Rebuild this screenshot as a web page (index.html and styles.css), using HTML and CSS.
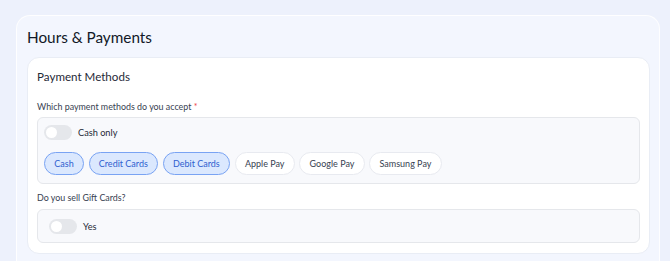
FILE: index.html
```html
<!DOCTYPE html>
<html>
<head>
<meta charset="utf-8">
<link rel="stylesheet" href="styles.css">
</head>
<body>
<div class="page">
  <section class="outer">
    <h1 class="title">Hours &amp; Payments</h1>
    <div class="card">
      <h2 class="card-title">Payment Methods</h2>
      <div class="label">Which payment methods do you accept <span class="req">*</span></div>
      <div class="box box-methods">
        <div class="toggle-row">
          <span class="toggle"><span class="knob"></span></span>
          <span class="toggle-label">Cash only</span>
        </div>
        <div class="chips">
          <span class="chip on">Cash</span>
          <span class="chip on">Credit Cards</span>
          <span class="chip on">Debit Cards</span>
          <span class="chip">Apple Pay</span>
          <span class="chip">Google Pay</span>
          <span class="chip">Samsung Pay</span>
        </div>
      </div>
      <div class="label label-gift">Do you sell Gift Cards?</div>
      <div class="box box-gift">
        <div class="toggle-row">
          <span class="toggle"><span class="knob"></span></span>
          <span class="toggle-label">Yes</span>
        </div>
      </div>
    </div>
  </section>
</div>
</body>
</html>
```

FILE: styles.css
```css
* { box-sizing: border-box; }
html, body { margin: 0; padding: 0; }
body {
  background: #edf1fc;
  font-family: Lato, "Open Sans", sans-serif;
  color: #1f2937;
  height: 261px;
  overflow: hidden;
}
.page {
  padding: 15px 10px 0 16px;
}
.outer {
  background: #f3f6fe;
  border: 1.5px solid rgba(255,255,255,0.85);
  border-radius: 14px;
  padding: 10px 9px 20px 10px;
}
.title {
  margin: 0 0 9px 0;
  font-size: 15.3px;
  font-weight: 400;
  line-height: 22px;
  color: #111827;
}
.card {
  background: #fff;
  border: 1px solid #e9edf5;
  border-radius: 12px;
  padding: 10px 9px 10px 9px;
}
.card-title {
  margin: 0 0 14px 0;
  font-size: 11.6px;
  font-weight: 400;
  line-height: 18px;
  color: #1f2937;
}
.label {
  font-size: 8.9px;
  line-height: 14px;
  color: #374151;
  margin-bottom: 3px;
}
.req { color: #ef4444; }
.box {
  background: #f8f9fc;
  border: 1px solid #e5e7eb;
  border-radius: 6px;
}
.box-methods {
  padding: 7px 8px 8px 6px;
}
.toggle-row {
  display: flex;
  align-items: center;
  gap: 6px;
}
.toggle {
  width: 28px;
  height: 15px;
  border-radius: 8px;
  background: #e5e7eb;
  display: flex;
  align-items: center;
  padding: 0 2px;
}
.knob {
  width: 11px;
  height: 11px;
  border-radius: 50%;
  background: #fff;
}
.toggle-label {
  font-size: 9.2px;
  line-height: 15px;
  color: #1f2937;
}
.chips {
  display: flex;
  gap: 4.5px;
  margin-top: 12px;
}
.chip {
  height: 23px;
  display: inline-flex;
  align-items: center;
  padding: 0 9.3px;
  border-radius: 12px;
  border: 1px solid #e8eaf0;
  background: #fff;
  font-size: 9px;
  color: #374151;
}
.chip.on {
  background: #dbe8fe;
  border-color: #79a3f3;
  color: #2f5fcf;
}
.label-gift {
  margin-top: 7px;
  margin-bottom: 4px;
}
.box-gift {
  padding: 8.5px 11px;
}
```
